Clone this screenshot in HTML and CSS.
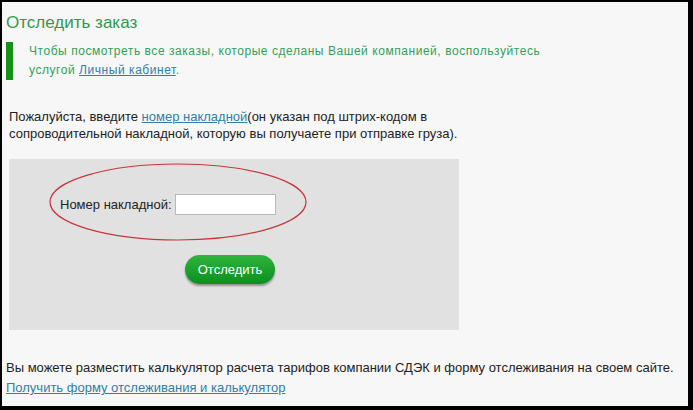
FILE: index.html
```html
<!DOCTYPE html>
<html lang="ru">
<head>
  <meta charset="UTF-8">
  <title>Отследить заказ</title>
  <link rel="stylesheet" href="styles.css">
</head>
<body>
  <div class="page">
    <h1 class="title">Отследить заказ</h1>

    <div class="notice">
      Чтобы посмотреть все заказы, которые сделаны Вашей компанией, воспользуйтесь<br>
      услугой <a href="#">Личный кабинет</a>.
    </div>

    <p class="intro">
      Пожалуйста, введите <a href="#">номер накладной</a>(он указан под штрих-кодом в<br>
      сопроводительной накладной, которую вы получаете при отправке груза).
    </p>

    <div class="track-box">
      <div class="track-row">
        <svg class="oval" width="262" height="80" viewBox="0 0 262 80">
          <ellipse cx="131" cy="40" rx="128" ry="38" fill="none" stroke="#c9363a" stroke-width="1.2"/>
        </svg>
        <label for="invoice">Номер накладной:</label>
        <input type="text" id="invoice">
      </div>
      <button class="track-btn">Отследить</button>
    </div>

    <p class="footer-text">
      Вы можете разместить калькулятор расчета тарифов компании СДЭК и форму отслеживания на своем сайте.<br>
      <a href="#">Получить форму отслеживания и калькулятор</a>
    </p>
  </div>
</body>
</html>
```

FILE: styles.css
```css
html, body {
  height: 100%;
}
body {
  margin: 0;
  background-color: #000;
  padding: 2px 5px 4px 2px;
  box-sizing: border-box;
  font-family: "Liberation Sans", Arial, sans-serif;
  font-size: 13px;
  color: #222;
}
.page {
  background-color: #f7f7f7;
  height: 100%;
  padding: 0 4px;
  box-sizing: border-box;
  overflow: hidden;
}
a {
  color: #2f7fa6;
}
.title {
  margin: 0;
  padding-top: 11px;
  font-size: 17px;
  font-weight: normal;
  color: #2e9a4c;
  line-height: 20px;
}
.notice {
  margin-top: 9px;
  border-left: 7px solid #17901a;
  padding: 0 0 0 16px;
  color: #33a05a;
  font-size: 12px;
  line-height: 19px;
  letter-spacing: 0.55px;
}
.intro {
  margin: 28px 0 0 3px;
  line-height: 17px;
}
.track-box {
  margin: 17px 0 0 3px;
  width: 450px;
  height: 171px;
  background-color: #e1e1e1;
  padding-top: 34px;
  box-sizing: border-box;
}
.track-row {
  position: relative;
  display: flex;
  align-items: center;
  padding-left: 51px;
  height: 22px;
}
.oval {
  position: absolute;
  left: 38px;
  top: -31px;
}
.track-row label {
  margin-right: 3px;
}
.track-row input {
  width: 101px;
  height: 21px;
  box-sizing: border-box;
  border: 1px solid #b8b8b8;
  background: #fff;
  padding: 2px 4px;
}
.track-btn {
  display: block;
  margin: 40px 0 0 176px;
  width: 90px;
  height: 29px;
  border: none;
  border-radius: 15px;
  background: linear-gradient(#2fb43c, #0b8f1f);
  box-shadow: 0 2px 2px rgba(0, 0, 0, 0.35);
  color: #fff;
  font-family: "Liberation Sans", Arial, sans-serif;
  font-size: 13px;
  cursor: pointer;
}
.footer-text {
  margin: 28px 0 0 0;
  line-height: 20px;
}
```
